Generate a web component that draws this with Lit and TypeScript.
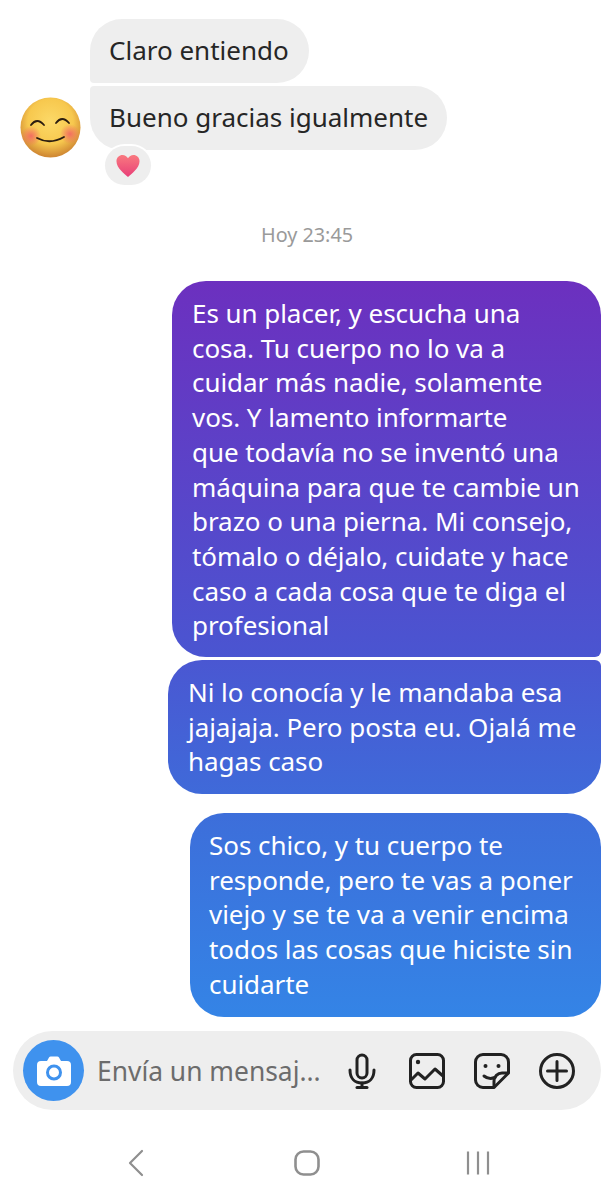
import { LitElement, html, css } from "lit";
import { customElement } from "lit/decorators.js";

@customElement("app-root")
export class AppRoot extends LitElement {
  static styles = css`
    :host { display: block; width: 614px; height: 1200px; background: #fff; font-family: "Noto Sans", "Open Sans", sans-serif; overflow: hidden; }
    .thread { display: flex; flex-direction: column; padding-top: 19px; height: 1031px; box-sizing: border-box; }
    .in { font-size: 26px; line-height: 34px; color: #262626; background: #eee; padding: 14px 19px; height: 64px; box-sizing: border-box; width: fit-content; white-space: nowrap; }
    .in1 { margin-left: 90px; border-radius: 32px 32px 32px 4px; width: 219px; }
    .row { display: flex; margin-top: 3px; padding-left: 20px; gap: 9px; }
    .in2 { border-radius: 4px 32px 32px 32px; width: 357px; }
    .avatar { width: 61px; height: 61px; margin-top: 11px; display: block; flex: none; }
    .react { position: relative; margin: -12px 0 0 105px; width: 46px; height: 39px; border-radius: 20px; background: #eee; box-shadow: 0 0 0 2px #fff; display: flex; align-items: center; justify-content: center; }
    .react svg { width: 24px; height: 24px; display: block; }
    .time { margin-top: 38px; text-align: center; font-size: 19.8px; line-height: 24px; color: #9a9a9a; }
    .out { align-self: flex-end; margin-right: 13px; box-sizing: border-box; color: #fff; font-size: 26px; line-height: 34.7px; white-space: nowrap; letter-spacing: -0.05px; }
    .o1 { margin-top: 34px; width: 429px; height: 376px; padding: 15px 0 0 20px; border-radius: 34px 34px 6px 34px; background: linear-gradient(#6c30bf, #4a55d1); }
    .o2 { margin-top: 3px; width: 433px; height: 134px; padding: 15px 0 0 20px; border-radius: 34px 6px 34px 34px; background: linear-gradient(#4a57d2, #3f6ad9); }
    .o3 { margin-top: 19px; width: 411px; height: 204px; padding: 15px 0 0 19px; border-radius: 34px; background: linear-gradient(#3d6eda, #3484e6); }
    .line { display: block; }
    .bar { margin: 0 13px; height: 79px; border-radius: 40px; background: #eee; display: flex; align-items: center; padding-left: 10px; box-sizing: border-box; }
    .cam { width: 61px; height: 61px; border-radius: 50%; background: #3f92ee; display: flex; align-items: center; justify-content: center; flex: none; }
    .cam svg { width: 34px; height: 30px; display: block; }
    .ph { margin-left: 13px; width: 227px; font-size: 26.400px; line-height: 34px; color: #6c6c6c; white-space: nowrap; flex: none; }
    .icons { display: flex; align-items: center; gap: 29px; margin-left: 20px; }
    .icons svg { width: 36px; height: 36px; display: block; }
    .nav { display: flex; justify-content: center; align-items: center; gap: 145px; margin-top: 39px; }
    .nav svg { width: 26px; height: 28px; display: block; }
  `;

  render() {
    return html`
      <div class="thread">
        <div class="in in1">Claro entiendo</div>
        <div class="row">
          <svg class="avatar" viewBox="0 0 61 61">
            <defs>
              <radialGradient id="face" cx="50%" cy="40%" r="58%">
                <stop offset="0" stop-color="#fcd968"/><stop offset=".65" stop-color="#f7c84e"/><stop offset="1" stop-color="#d18a34"/>
              </radialGradient>
              <radialGradient id="blush"><stop offset="0" stop-color="#f26a62" stop-opacity=".95"/><stop offset="1" stop-color="#f26a62" stop-opacity="0"/></radialGradient>
            </defs>
            <circle cx="30.5" cy="30.5" r="30" fill="url(#face)"/>
            <circle cx="11" cy="39" r="10" fill="url(#blush)"/>
            <circle cx="50" cy="37" r="10" fill="url(#blush)"/>
            <g fill="none" stroke="#2b1d10" stroke-width="1.8" stroke-linecap="round">
              <path d="M11 28q6-8 13 0"/><path d="M36 26q6-8 13 0"/>
              <path d="M17 41q13 7 27 -1"/>
            </g>
          </svg>
          <div class="in in2">Bueno gracias igualmente</div>
        </div>
        <div class="react">
          <svg viewBox="0 0 25 25">
            <defs><linearGradient id="heart" x1="0" y1="0" x2="0" y2="1"><stop offset="0" stop-color="#f9797f"/><stop offset="1" stop-color="#e83f78"/></linearGradient></defs>
            <path d="M12.500 24C9 20.500 0.500 15 0.500 7.500 0.500 3.500 3.500 1 6.800 1 9.300 1 11.300 2.300 12.500 4.500 13.700 2.300 15.700 1 18.200 1 21.500 1 24.500 3.500 24.500 7.500 24.500 15 16 20.500 12.500 24Z" fill="url(#heart)"/>
          </svg>
        </div>
        <div class="time">Hoy 23:45</div>
        <div class="out o1">
          <span class="line">Es un placer, y escucha una</span>
          <span class="line">cosa. Tu cuerpo no lo va a</span>
          <span class="line">cuidar más nadie, solamente</span>
          <span class="line">vos. Y lamento informarte</span>
          <span class="line">que todavía no se inventó una</span>
          <span class="line">máquina para que te cambie un</span>
          <span class="line">brazo o una pierna. Mi consejo,</span>
          <span class="line">tómalo o déjalo, cuidate y hace</span>
          <span class="line">caso a cada cosa que te diga el</span>
          <span class="line">profesional</span>
        </div>
        <div class="out o2">
          <span class="line">Ni lo conocía y le mandaba esa</span>
          <span class="line">jajajaja. Pero posta eu. Ojalá me</span>
          <span class="line">hagas caso</span>
        </div>
        <div class="out o3">
          <span class="line">Sos chico, y tu cuerpo te</span>
          <span class="line">responde, pero te vas a poner</span>
          <span class="line">viejo y se te va a venir encima</span>
          <span class="line">todos las cosas que hiciste sin</span>
          <span class="line">cuidarte</span>
        </div>
      </div>
      <div class="bar">
        <div class="cam">
          <svg viewBox="0 0 34 30">
            <path d="M4 5h6l2-3.500a2 2 0 0 1 1.700-1h6.600a2 2 0 0 1 1.700 1L24 5h6a4 4 0 0 1 4 4v17a4 4 0 0 1-4 4H4a4 4 0 0 1-4-4V9a4 4 0 0 1 4-4Z" fill="#fff"/>
            <circle cx="17" cy="16.500" r="6.500" fill="none" stroke="#3f92ee" stroke-width="3"/>
          </svg>
        </div>
        <div class="ph">Envía un mensaj...</div>
        <div class="icons">
          <svg viewBox="0 0 36 36" fill="none" stroke="#222" stroke-width="3" stroke-linecap="round" stroke-linejoin="round">
            <rect x="13" y="2" width="10" height="23" rx="5"/>
            <path d="M6 17c0 8 4.500 13 12 13s12-5 12-13"/>
            <path d="M18 30v4"/><path d="M13 34.500h10"/>
          </svg>
          <svg viewBox="0 0 36 36" fill="none" stroke="#222" stroke-width="3" stroke-linecap="round" stroke-linejoin="round">
            <rect x="1.500" y="1.500" width="33" height="33" rx="6"/>
            <circle cx="9" cy="9" r="2.200" fill="#222" stroke="none"/>
            <path d="M2 27l7-7 7 6 10-10 8 7"/>
          </svg>
          <svg viewBox="0 0 36 36" fill="none" stroke="#222" stroke-width="3" stroke-linecap="round" stroke-linejoin="round">
            <path d="M20 34.500H9a7.500 7.500 0 0 1-7.500-7.500V9A7.500 7.500 0 0 1 9 1.500h18A7.500 7.500 0 0 1 34.500 9v11Z"/>
            <path d="M34 20h-6a8 8 0 0 0-8 8v6"/>
            <circle cx="11.500" cy="13" r="2" fill="#222" stroke="none"/>
            <circle cx="24.500" cy="13" r="2" fill="#222" stroke="none"/>
            <path d="M10 23c3 2.500 7 3 11 1.500"/>
          </svg>
          <svg viewBox="0 0 36 36" fill="none" stroke="#222" stroke-width="3" stroke-linecap="round">
            <circle cx="18" cy="18" r="16.500"/>
            <path d="M8.500 18h19M18 8.500v19"/>
          </svg>
        </div>
      </div>
      <div class="nav">
        <svg viewBox="0 0 26 28" fill="none" stroke="#8f8f8f" stroke-width="2.200" stroke-linecap="round" stroke-linejoin="round"><path d="M19 2 7 14l12 12"/></svg>
        <svg viewBox="0 0 26 28" fill="none" stroke="#8f8f8f" stroke-width="2.600"><rect x="1.500" y="2.500" width="23" height="23" rx="8"/></svg>
        <svg viewBox="0 0 26 28" fill="none" stroke="#8f8f8f" stroke-width="2.200"><path d="M3 2.500v23M13 2.500v23M23 2.500v23"/></svg>
      </div>
    `;
  }
}
